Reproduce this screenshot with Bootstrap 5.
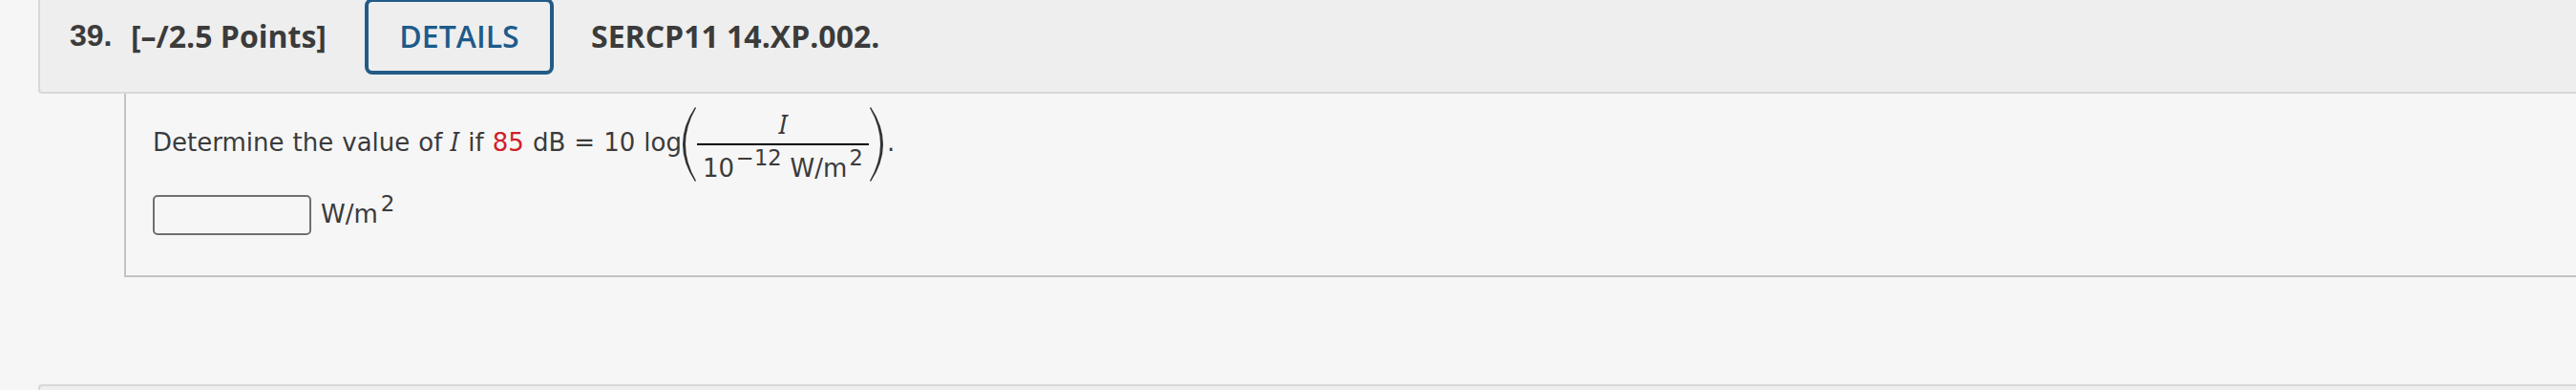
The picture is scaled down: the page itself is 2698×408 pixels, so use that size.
<!DOCTYPE html>
<html lang="en">
<head>
    <meta charset="UTF-8" />
    <meta name="viewport" content="width=device-width, initial-scale=1.0" />
    <title>Question 39</title>
    <link href="https://cdn.jsdelivr.net/npm/bootstrap@5.3.3/dist/css/bootstrap.min.css" rel="stylesheet" />
    <style>
        body {
            background-color: #f6f6f6;
            color: #3b3b3b;
            height: 408px;
        }

        .question-list {
            padding-left: 40px;
        }

        .question-header {
            height: 98px;
            padding: 0 0 20px 31px;
            background-color: #eee;
            border: solid #d8d8d8;
            border-width: 0 0 2px 2px;
            border-bottom-left-radius: 4px;
            font: 700 32px/44px "Open Sans", sans-serif;
        }

        .question-number {
            width: 64px;
            padding-bottom: 2px;
            font-family: "Liberation Sans", Arial, sans-serif;
        }

        .question-points {
            width: 245px;
        }

        .btn-details {
            --bs-btn-color: #1d5b8b;
            --bs-btn-border-color: #225b87;
            --bs-btn-border-width: 4px;
            --bs-btn-border-radius: 8px;
            --bs-btn-font-family: "Open Sans", sans-serif;
            --bs-btn-font-size: 32px;
            --bs-btn-font-weight: 600;
            --bs-btn-line-height: 44px;
            --bs-btn-padding-x: 0;
            --bs-btn-padding-y: 14px;
            width: 198px;
            margin-right: 39px;
        }

        .question-body {
            height: 192px;
            margin-left: 90px;
            padding: 7px 0 0 28px;
            border: solid #c2c2c2;
            border-width: 0 0 2px 2px;
            font: 26px/32px Verdana, "DejaVu Sans", sans-serif;
        }

        .formula {
            height: 88px;
            word-spacing: 0.8px;
        }

        .variable {
            font-family: "Noto Sans", sans-serif;
            font-size: 27px;
            font-style: italic;
            line-height: 1;
            margin: 0 1px 0 -1px;
        }

        .value {
            color: #d0202a;
        }

        .paren {
            width: 16px;
            height: 80px;
            margin-top: 4px;
            fill: #333;
        }

        .fraction {
            width: 180px;
            margin-top: 6px;
        }

        .numerator {
            height: 36px;
            padding-left: 2px;
            line-height: 28px;
            border-bottom: 2px solid #000;
        }

        .denominator {
            height: 37px;
            padding: 8px 0 0 6px;
        }

        .power {
            font-size: 23px;
            line-height: 0;
            vertical-align: 12px;
            margin-left: 3px;
        }

        .denominator .power {
            font-size: 22.5px;
            margin-left: 2px;
        }

        .answer-row {
            margin-top: 11px;
        }

        .answer {
            width: 166px;
            height: 42px;
            background-color: #f6f6f6;
            border: 2px solid #6f6f6f;
            border-radius: 5px;
        }

        .unit {
            padding: 0 0 2px 10px;
        }

        .period {
            padding-left: 3px;
        }

        .next-question {
            height: 6px;
            margin-top: 112px;
            background-color: #eee;
            border: solid #d8d8d8;
            border-width: 2px 0 0 2px;
            border-top-left-radius: 4px;
        }
    </style>
</head>
<body class="overflow-hidden">

<main class="question-list">
    <!-- Question header -->
    <header class="question-header d-flex align-items-center">
        <span class="question-number">39.</span>
        <span class="question-points">[–/2.5 Points]</span>
        <button type="button" class="btn btn-details">DETAILS</button>
        <span>SERCP11 14.XP.002.</span>
    </header>

    <!-- Question text -->
    <section class="question-body">
        <div class="formula d-flex align-items-center text-nowrap">
            <span>Determine the value of <span class="variable">I</span> if <span class="value">85</span> dB = 10 log</span>
            <svg class="paren" viewBox="0 0 16 80"><path d="M14 1 Q-12 40 14 79 L15 78 Q-7 40 15 2 Z" /></svg>
            <div class="fraction">
                <div class="numerator text-center"><span class="variable">I</span></div>
                <div class="denominator">10<span class="power">−12</span> W/m<span class="power">2</span></div>
            </div>
            <svg class="paren" viewBox="0 0 16 80"><path d="M2 1 Q28 40 2 79 L1 78 Q23 40 1 2 Z" /></svg>
            <span class="period">.</span>
        </div>

        <!-- Answer -->
        <div class="answer-row d-flex align-items-center">
            <input type="text" class="answer" aria-label="Answer" />
            <span class="unit">W/m<span class="power">2</span></span>
        </div>
    </section>

    <div class="next-question"></div>
</main>

<script src="https://cdn.jsdelivr.net/npm/bootstrap@5.3.3/dist/js/bootstrap.bundle.min.js"></script>
</body>
</html>
